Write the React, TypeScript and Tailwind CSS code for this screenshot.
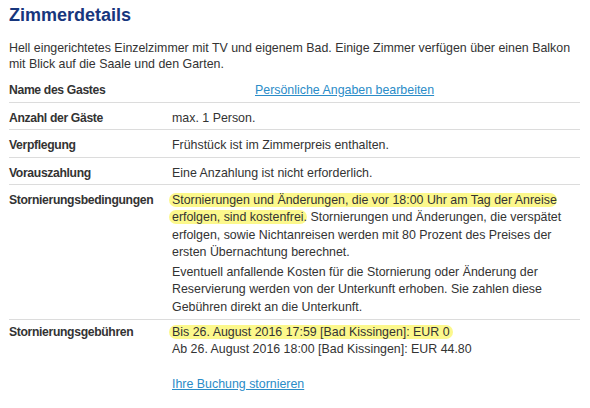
export default function App() {
  const rows: { label: string; value: React.ReactNode }[] = [
    {
      label: "Anzahl der Gäste",
      value: "max. 1 Person.",
    },
    {
      label: "Verpflegung",
      value: "Frühstück ist im Zimmerpreis enthalten.",
    },
    {
      label: "Vorauszahlung",
      value: "Eine Anzahlung ist nicht erforderlich.",
    },
  ];

  return (
    <div className="min-h-screen bg-white font-['Liberation_Sans',Arial,sans-serif] text-[12.4px] text-[#333]">
      <div className="w-[580px] pl-[9px] pt-[3px]">
        <h1 className="text-[18px] font-bold leading-[24px] text-[#17367d]">Zimmerdetails</h1>

        <p className="mt-[13px] leading-[16px]">
          Hell eingerichtetes Einzelzimmer mit TV und eigenem Bad. Einige Zimmer verfügen über einen Balkon
          mit Blick auf die Saale und den Garten.
        </p>

        <div className="mt-[3px]">
          <Row label="Name des Gastes">
            <span className="inline-block w-[83px]" />
            <a href="#" className="text-[#2a8cc8] underline">
              Persönliche Angaben bearbeiten
            </a>
          </Row>

          {rows.map((r) => (
            <Row key={r.label} label={r.label}>
              {r.value}
            </Row>
          ))}

          <Row label="Stornierungsbedingungen">
            <p className="leading-[17.3px]">
              <span className="-ml-[3px] rounded-[8px] bg-[#fcf88c] pl-[3px] box-decoration-clone">
                Stornierungen und Änderungen, die vor 18:00 Uhr am Tag der Anreise erfolgen, sind kostenfrei.
              </span>{" "}
              Stornierungen und Änderungen, die verspätet erfolgen, sowie Nichtanreisen werden mit 80 Prozent des
              Preises der ersten Übernachtung berechnet.
            </p>
            <p className="mt-[3px] leading-[17.3px]">
              Eventuell anfallende Kosten für die Stornierung oder Änderung der Reservierung werden von der
              Unterkunft erhoben. Sie zahlen diese Gebühren direkt an die Unterkunft.
            </p>
          </Row>

          <div className="flex pt-[4px]">
            <div className="w-[163px] shrink-0 text-[12.2px] font-bold leading-[17px] tracking-[-0.35px]">
              Stornierungsgebühren
            </div>
            <div className="flex-1 leading-[17px]">
              <div>
                <span className="-ml-[3px] rounded-[8px] bg-[#fcf88c] px-[3px]">
                  Bis 26. August 2016 17:59 [Bad Kissingen]: EUR 0
                </span>
              </div>
              <div>Ab 26. August 2016 18:00 [Bad Kissingen]: EUR 44.80</div>
              <a href="#" className="mt-[18px] inline-block text-[#2a8cc8] underline">
                Ihre Buchung stornieren
              </a>
            </div>
          </div>
        </div>
      </div>
    </div>
  );
}

function Row({ label, children }: { label: string; children: React.ReactNode }) {
  return (
    <div className="flex border-b border-[#dcdcdc] pt-[7px] pb-[2.5px]">
      <div className="w-[163px] shrink-0 text-[12.2px] font-bold leading-[17px] tracking-[-0.35px]">{label}</div>
      <div className="flex-1 pr-[6px] leading-[17px]">{children}</div>
    </div>
  );
}
